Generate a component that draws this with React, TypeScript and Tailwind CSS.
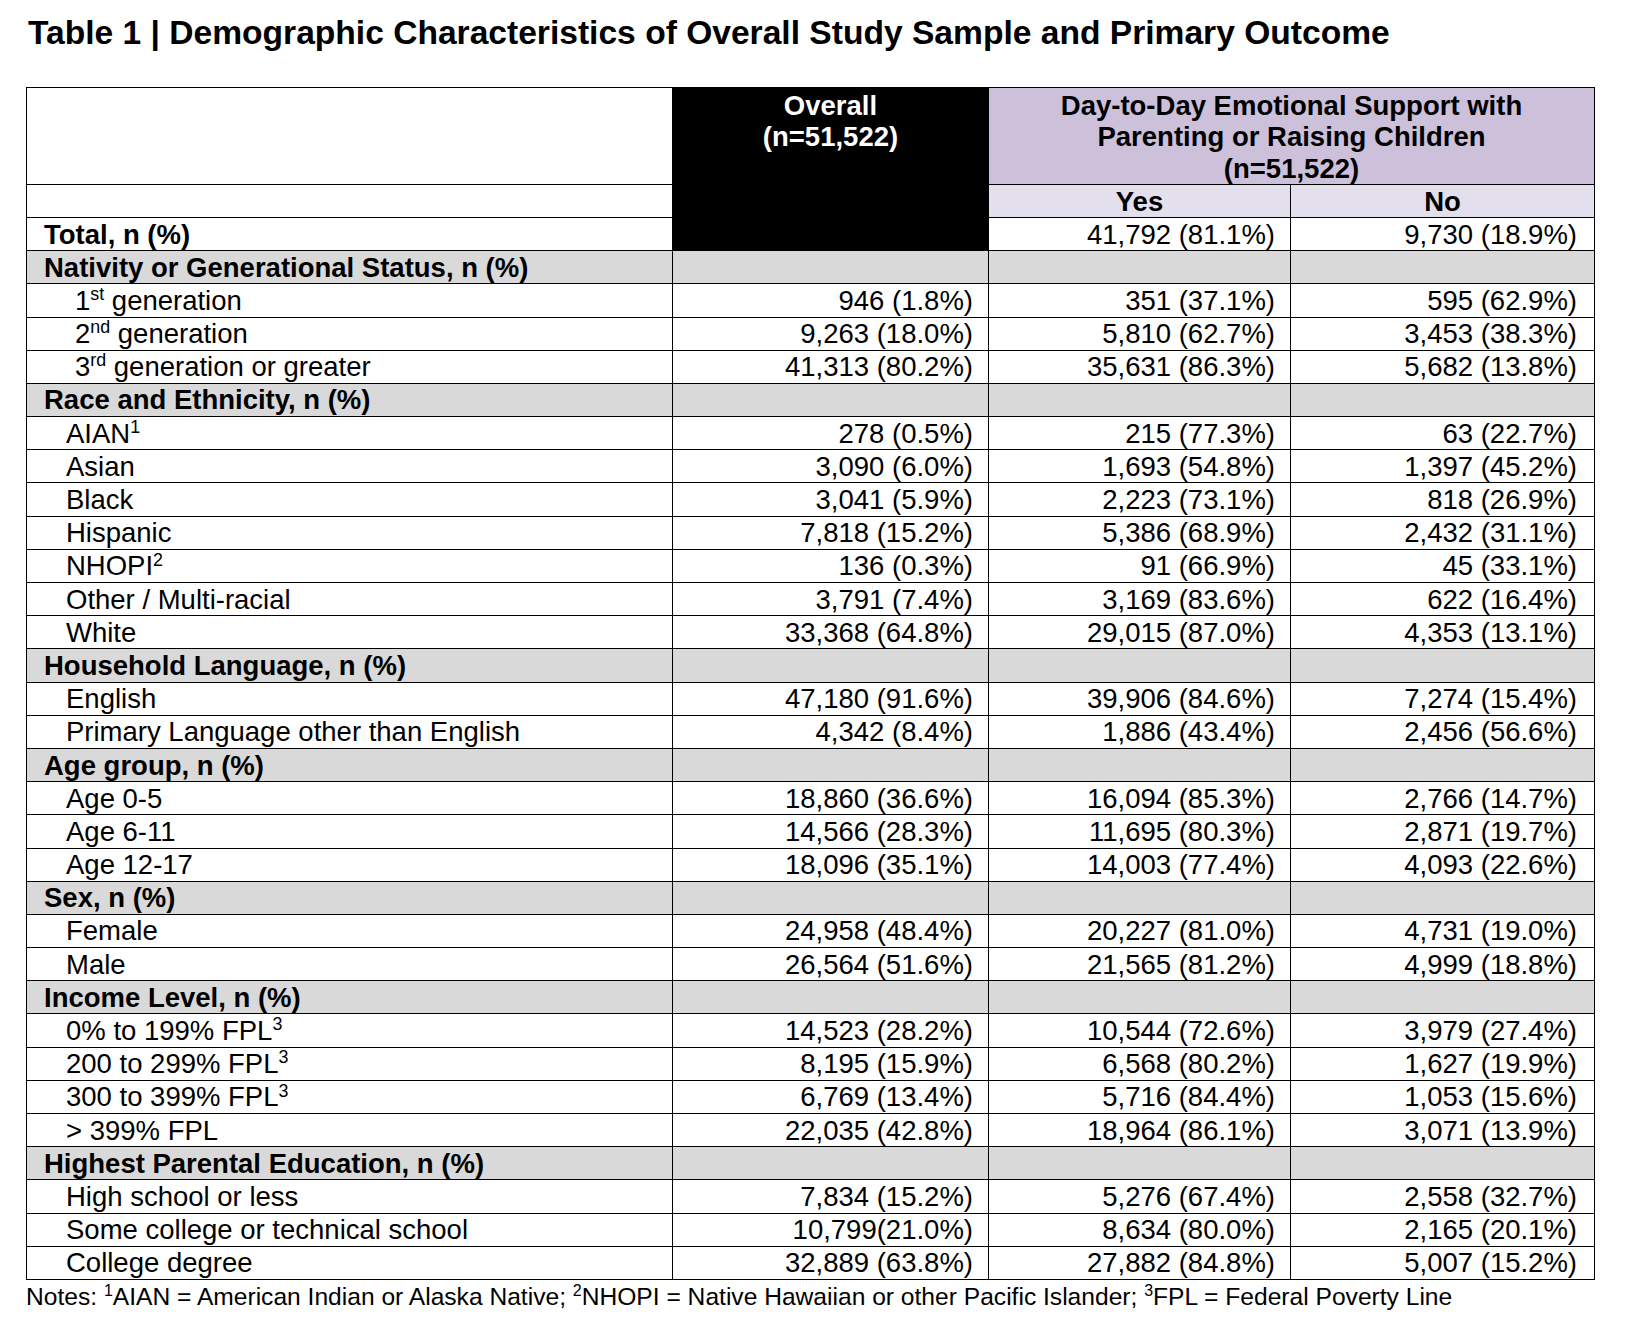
import type { ReactNode } from 'react'

type Row = { label: ReactNode; overall: string; yes: string; no: string }
type Section = { title: string; indent: 'wide' | 'normal'; rows: Row[] }

const sup = (s: string) => <sup className="text-[65%] top-[-0.55em]">{s}</sup>

const sections: Section[] = [
    {
        title: 'Nativity or Generational Status, n (%)',
        indent: 'wide',
        rows: [
            { label: <>1{sup('st')} generation</>, overall: '946 (1.8%)', yes: '351 (37.1%)', no: '595 (62.9%)' },
            { label: <>2{sup('nd')} generation</>, overall: '9,263 (18.0%)', yes: '5,810 (62.7%)', no: '3,453 (38.3%)' },
            { label: <>3{sup('rd')} generation or greater</>, overall: '41,313 (80.2%)', yes: '35,631 (86.3%)', no: '5,682 (13.8%)' },
        ],
    },
    {
        title: 'Race and Ethnicity, n (%)',
        indent: 'normal',
        rows: [
            { label: <>AIAN{sup('1')}</>, overall: '278 (0.5%)', yes: '215 (77.3%)', no: '63 (22.7%)' },
            { label: 'Asian', overall: '3,090 (6.0%)', yes: '1,693 (54.8%)', no: '1,397 (45.2%)' },
            { label: 'Black', overall: '3,041 (5.9%)', yes: '2,223 (73.1%)', no: '818 (26.9%)' },
            { label: 'Hispanic', overall: '7,818 (15.2%)', yes: '5,386 (68.9%)', no: '2,432 (31.1%)' },
            { label: <>NHOPI{sup('2')}</>, overall: '136 (0.3%)', yes: '91 (66.9%)', no: '45 (33.1%)' },
            { label: 'Other / Multi-racial', overall: '3,791 (7.4%)', yes: '3,169 (83.6%)', no: '622 (16.4%)' },
            { label: 'White', overall: '33,368 (64.8%)', yes: '29,015 (87.0%)', no: '4,353 (13.1%)' },
        ],
    },
    {
        title: 'Household Language, n (%)',
        indent: 'normal',
        rows: [
            { label: 'English', overall: '47,180 (91.6%)', yes: '39,906 (84.6%)', no: '7,274 (15.4%)' },
            { label: 'Primary Language other than English', overall: '4,342 (8.4%)', yes: '1,886 (43.4%)', no: '2,456 (56.6%)' },
        ],
    },
    {
        title: 'Age group, n (%)',
        indent: 'normal',
        rows: [
            { label: 'Age 0-5', overall: '18,860 (36.6%)', yes: '16,094 (85.3%)', no: '2,766 (14.7%)' },
            { label: 'Age 6-11', overall: '14,566 (28.3%)', yes: '11,695 (80.3%)', no: '2,871 (19.7%)' },
            { label: 'Age 12-17', overall: '18,096 (35.1%)', yes: '14,003 (77.4%)', no: '4,093 (22.6%)' },
        ],
    },
    {
        title: 'Sex, n (%)',
        indent: 'normal',
        rows: [
            { label: 'Female', overall: '24,958 (48.4%)', yes: '20,227 (81.0%)', no: '4,731 (19.0%)' },
            { label: 'Male', overall: '26,564 (51.6%)', yes: '21,565 (81.2%)', no: '4,999 (18.8%)' },
        ],
    },
    {
        title: 'Income Level, n (%)',
        indent: 'normal',
        rows: [
            { label: <>0% to 199% FPL{sup('3')}</>, overall: '14,523 (28.2%)', yes: '10,544 (72.6%)', no: '3,979 (27.4%)' },
            { label: <>200 to 299% FPL{sup('3')}</>, overall: '8,195 (15.9%)', yes: '6,568 (80.2%)', no: '1,627 (19.9%)' },
            { label: <>300 to 399% FPL{sup('3')}</>, overall: '6,769 (13.4%)', yes: '5,716 (84.4%)', no: '1,053 (15.6%)' },
            { label: '> 399% FPL', overall: '22,035 (42.8%)', yes: '18,964 (86.1%)', no: '3,071 (13.9%)' },
        ],
    },
    {
        title: 'Highest Parental Education, n (%)',
        indent: 'normal',
        rows: [
            { label: 'High school or less', overall: '7,834 (15.2%)', yes: '5,276 (67.4%)', no: '2,558 (32.7%)' },
            { label: 'Some college or technical school', overall: '10,799(21.0%)', yes: '8,634 (80.0%)', no: '2,165 (20.1%)' },
            { label: 'College degree', overall: '32,889 (63.8%)', yes: '27,882 (84.8%)', no: '5,007 (15.2%)' },
        ],
    },
]

const cell = 'border border-black align-middle p-0'
const num = `${cell} text-right pr-[15px]`
const numLast = `${cell} text-right pr-[17px]`

function SectionRows({ section }: { section: Section }) {
    return (
        <>
            <tr className="h-[33.2px] bg-[#d9d9d9]">
                <td className={`${cell} pl-[17px] font-bold`}>{section.title}</td>
                <td className={cell} />
                <td className={cell} />
                <td className={cell} />
            </tr>
            {section.rows.map((row, i) => (
                <tr key={i} className="h-[33.2px]">
                    <td className={`${cell} ${section.indent === 'wide' ? 'pl-[48px]' : 'pl-[39px]'}`}>
                        {row.label}
                    </td>
                    <td className={num}>{row.overall}</td>
                    <td className={num}>{row.yes}</td>
                    <td className={numLast}>{row.no}</td>
                </tr>
            ))}
        </>
    )
}

export default function App() {
    return (
        <div className="min-h-[1338px] w-[1630px] bg-white font-['Liberation_Sans',Arial,sans-serif] text-black">
            <div className="pl-[28px] pt-[14px]">
                <h1 className="text-[33.6px] font-bold leading-[1.15]">
                    Table 1 | Demographic Characteristics of Overall Study Sample and Primary Outcome
                </h1>
            </div>
            <div className="pl-[26px] pt-[34px]">
                <table className="w-[1568px] table-fixed border-collapse text-[27.5px] leading-[31px]">
                    <colgroup>
                        <col className="w-[646px]" />
                        <col className="w-[316px]" />
                        <col className="w-[302px]" />
                        <col className="w-[304px]" />
                    </colgroup>
                    <tbody>
                        <tr className="h-[97px]">
                            <td className={cell} />
                            <td
                                rowSpan={3}
                                className="border border-black bg-black p-0 pt-[2px] text-center align-top font-bold text-white"
                            >
                                Overall
                                <br />
                                (n=51,522)
                            </td>
                            <td
                                colSpan={2}
                                className="border border-black bg-[#ccc0da] p-0 pt-[2px] text-center align-top font-bold leading-[31.5px]"
                            >
                                Day-to-Day Emotional Support with
                                <br />
                                Parenting or Raising Children
                                <br />
                                (n=51,522)
                            </td>
                        </tr>
                        <tr className="h-[33px]">
                            <td className={cell} />
                            <td className={`${cell} bg-[#e4dfec] text-center font-bold`}>Yes</td>
                            <td className={`${cell} bg-[#e4dfec] text-center font-bold`}>No</td>
                        </tr>
                        <tr className="h-[33px]">
                            <td className={`${cell} pl-[17px] font-bold`}>Total, n (%)</td>
                            <td className={num}>41,792 (81.1%)</td>
                            <td className={numLast}>9,730 (18.9%)</td>
                        </tr>
                        {sections.map((s) => (
                            <SectionRows key={s.title} section={s} />
                        ))}
                    </tbody>
                </table>
                <p className="pt-[2px] text-[24.6px] leading-[30px]">
                    Notes: {sup('1')}AIAN = American Indian or Alaska Native; {sup('2')}NHOPI = Native Hawaiian or
                    other Pacific Islander; {sup('3')}FPL = Federal Poverty Line
                </p>
            </div>
        </div>
    )
}
